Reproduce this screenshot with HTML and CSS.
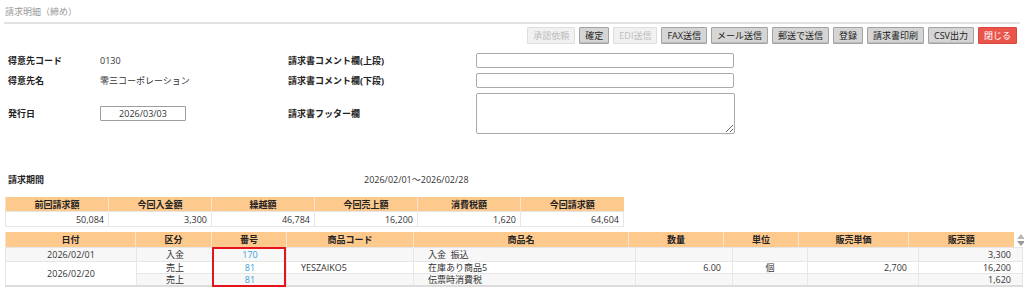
FILE: index.html
```html
<!DOCTYPE html>
<html lang="ja">
<head>
    <meta charset="UTF-8">
    <title>請求明細（締め）</title>
    <link rel="stylesheet" href="styles.css">
</head>
<body>
    <div class="page">
        <!-- Title -->
        <div class="title">請求明細（締め）</div>

        <!-- Toolbar -->
        <div class="toolbar">
            <button class="btn disabled">承認依頼</button>
            <button class="btn">確定</button>
            <button class="btn disabled">EDI送信</button>
            <button class="btn">FAX送信</button>
            <button class="btn">メール送信</button>
            <button class="btn">郵送で送信</button>
            <button class="btn">登録</button>
            <button class="btn">請求書印刷</button>
            <button class="btn">CSV出力</button>
            <button class="btn close">閉じる</button>
        </div>

        <!-- Header form -->
        <div class="form">
            <div class="label">得意先コード</div>
            <div class="value">0130</div>
            <div class="label">請求書コメント欄(上段)</div>
            <input type="text" class="field">

            <div class="label">得意先名</div>
            <div class="value">零三コーポレーション</div>
            <div class="label">請求書コメント欄(下段)</div>
            <input type="text" class="field">

            <div class="label">発行日</div>
            <div class="value"><input type="text" class="date" value="2026/03/03"></div>
            <div class="label">請求書フッター欄</div>
            <textarea class="field area"></textarea>
        </div>

        <div class="period">
            <span class="label">請求期間</span>
            <span>2026/02/01～2026/02/28</span>
        </div>

        <!-- Totals -->
        <table class="summary">
            <tr>
                <th>前回請求額</th>
                <th>今回入金額</th>
                <th>繰越額</th>
                <th>今回売上額</th>
                <th>消費税額</th>
                <th>今回請求額</th>
            </tr>
            <tr>
                <td>50,084</td>
                <td>3,300</td>
                <td>46,784</td>
                <td>16,200</td>
                <td>1,620</td>
                <td>64,604</td>
            </tr>
        </table>

        <!-- Detail lines -->
        <div class="detail">
            <div class="detail-head">
                <table class="grid head">
                    <colgroup>
                        <col style="width:130px"><col style="width:76px"><col style="width:75px">
                        <col style="width:127px"><col style="width:215px"><col style="width:95px">
                        <col style="width:75px"><col style="width:110px"><col style="width:105px">
                    </colgroup>
                    <tr>
                        <th>日付</th>
                        <th>区分</th>
                        <th>番号</th>
                        <th>商品コード</th>
                        <th>商品名</th>
                        <th>数量</th>
                        <th>単位</th>
                        <th>販売単価</th>
                        <th>販売額</th>
                    </tr>
                </table>
                <div class="sorter">
                    <span class="up"></span>
                    <span class="down"></span>
                </div>
            </div>
            <div class="detail-body">
                <table class="grid body">
                    <colgroup>
                        <col style="width:131px"><col style="width:77px"><col style="width:73px">
                        <col style="width:127px"><col style="width:222px"><col style="width:97px">
                        <col style="width:75px"><col style="width:111px"><col style="width:104px">
                    </colgroup>
                    <tr class="odd">
                        <td class="c">2026/02/01</td>
                        <td class="c">入金</td>
                        <td class="c link">170</td>
                        <td class="l"></td>
                        <td class="l">入金&nbsp;&nbsp;振込</td>
                        <td class="r"></td>
                        <td class="c"></td>
                        <td class="r"></td>
                        <td class="r">3,300</td>
                    </tr>
                    <tr class="even">
                        <td class="c" rowspan="2">2026/02/20</td>
                        <td class="c">売上</td>
                        <td class="c link">81</td>
                        <td class="l">YESZAIKO5</td>
                        <td class="l">在庫あり商品5</td>
                        <td class="r">6.00</td>
                        <td class="c">個</td>
                        <td class="r">2,700</td>
                        <td class="r">16,200</td>
                    </tr>
                    <tr class="odd">
                        <td class="c">売上</td>
                        <td class="c link">81</td>
                        <td class="l"></td>
                        <td class="l">伝票時消費税</td>
                        <td class="r"></td>
                        <td class="c"></td>
                        <td class="r"></td>
                        <td class="r">1,620</td>
                    </tr>
                </table>
                <div class="mark"></div>
            </div>
        </div>
    </div>
</body>
</html>
```

FILE: styles.css
```css
/* General */
body {
    margin: 0;
    padding: 0;
    font-family: "Open Sans", "Noto Sans CJK JP", sans-serif;
    font-size: 9px;
    color: #333;
    background: #ffffff;
}

.page {
    width: 1024px;
}

.title {
    margin: 0 4px;
    padding: 6px 1px 4px;
    line-height: 12px;
    color: #9a9a9a;
    border-bottom: 2px solid #e2e2e2;
}

/* Toolbar */
.toolbar {
    display: flex;
    justify-content: flex-end;
    gap: 4px;
    margin-top: 3px;
    padding-right: 7px;
}

.btn {
    height: 17px;
    padding: 0 5px;
    font-family: inherit;
    font-size: 9px;
    line-height: 15px;
    color: #222;
    background: #d5d5d5;
    border: 1px solid #a3a3a3;
    border-radius: 1px;
    box-shadow: inset 0 -1px 0 #bdbdbd;
    cursor: pointer;
}

.btn.disabled {
    color: #bdbdbd;
    background: #f1f1f1;
    border-color: #dedede;
    box-shadow: none;
}

.btn.close {
    color: #fff;
    background: #e9554b;
    border-color: #d9483f;
    box-shadow: none;
}

/* Form */
.form {
    display: grid;
    grid-template-columns: 92px 188px 188px 260px;
    grid-template-rows: 15px 15px 41px;
    row-gap: 5px;
    align-items: center;
    margin-top: 9px;
    padding-left: 8px;
}

.label {
    font-weight: bold;
    color: #222;
}

.value {
    display: flex;
    align-items: center;
}

.field {
    box-sizing: border-box;
    width: 258px;
    height: 15px;
    margin: 0;
    padding: 0 3px;
    border: 1px solid #ababab;
    border-radius: 2px;
    font-family: inherit;
    font-size: 9px;
}

.field.area {
    width: 259px;
    height: 41px;
}

.date {
    box-sizing: border-box;
    width: 86px;
    height: 15px;
    margin: 0;
    padding: 0;
    border: 1px solid #9d9d9d;
    border-radius: 1px;
    font-family: inherit;
    font-size: 9px;
    color: #333;
    text-align: center;
}

.period {
    display: grid;
    grid-template-columns: 356px auto;
    margin-top: 40px;
    padding-left: 8px;
    line-height: 12px;
}

/* Totals table */
.summary {
    width: 619px;
    margin: 11px 0 0 5px;
    border-collapse: collapse;
    table-layout: fixed;
    border-bottom: 1px solid #e4e4e4;
}

.summary th {
    height: 14px;
    padding: 0;
    background: #fec98d;
    border-left: 1px solid #f7e4cc;
    font-weight: bold;
    color: #222;
    line-height: 13px;
}

.summary td {
    height: 14px;
    padding: 0 4px;
    text-align: right;
    border: 1px solid #e6e6e6;
    line-height: 13px;
}

/* Detail table */
.detail {
    margin: 5px 0 0 5px;
}

.detail-head {
    display: flex;
    align-items: center;
}

.grid {
    border-collapse: collapse;
    table-layout: fixed;
}

.grid.head {
    width: 1008px;
}

.grid.head th {
    height: 15px;
    padding: 0;
    background: #fec98d;
    border-left: 1px solid #f7e4cc;
    font-weight: bold;
    color: #222;
    line-height: 14px;
}

.sorter {
    display: flex;
    flex-direction: column;
    gap: 2px;
    margin-left: 3px;
}

.sorter .up,
.sorter .down {
    width: 0;
    height: 0;
    border-left: 4px solid transparent;
    border-right: 4px solid transparent;
}

.sorter .up {
    border-bottom: 5px solid #b8b8b8;
}

.sorter .down {
    border-top: 5px solid #9a9a9a;
}

.detail-body {
    position: relative;
    width: 1017px;
}

.grid.body {
    width: 1017px;
    border-bottom: 2px solid #dcdcdc;
}

.grid.body td {
    height: 11px;
    padding: 0;
    border: 1px solid #e6e6e6;
    line-height: 11px;
    white-space: nowrap;
}

.grid.body tr:first-child td {
    height: 13px;
}

.grid.body tr.odd td {
    background: #f7f7f7;
}

.grid.body td[rowspan] {
    background: #fff !important;
}

.grid.body .c {
    text-align: center;
}

.grid.body .l {
    padding-left: 14px;
    text-align: left;
}

.grid.body .r {
    padding-right: 11px;
    text-align: right;
}

.grid.body .link {
    color: #3b9fd6;
}

/* Annotation box over the number column */
.mark {
    position: absolute;
    left: 207px;
    top: 0;
    width: 70px;
    height: 36px;
    border: 2px solid #e5131c;
}
```
